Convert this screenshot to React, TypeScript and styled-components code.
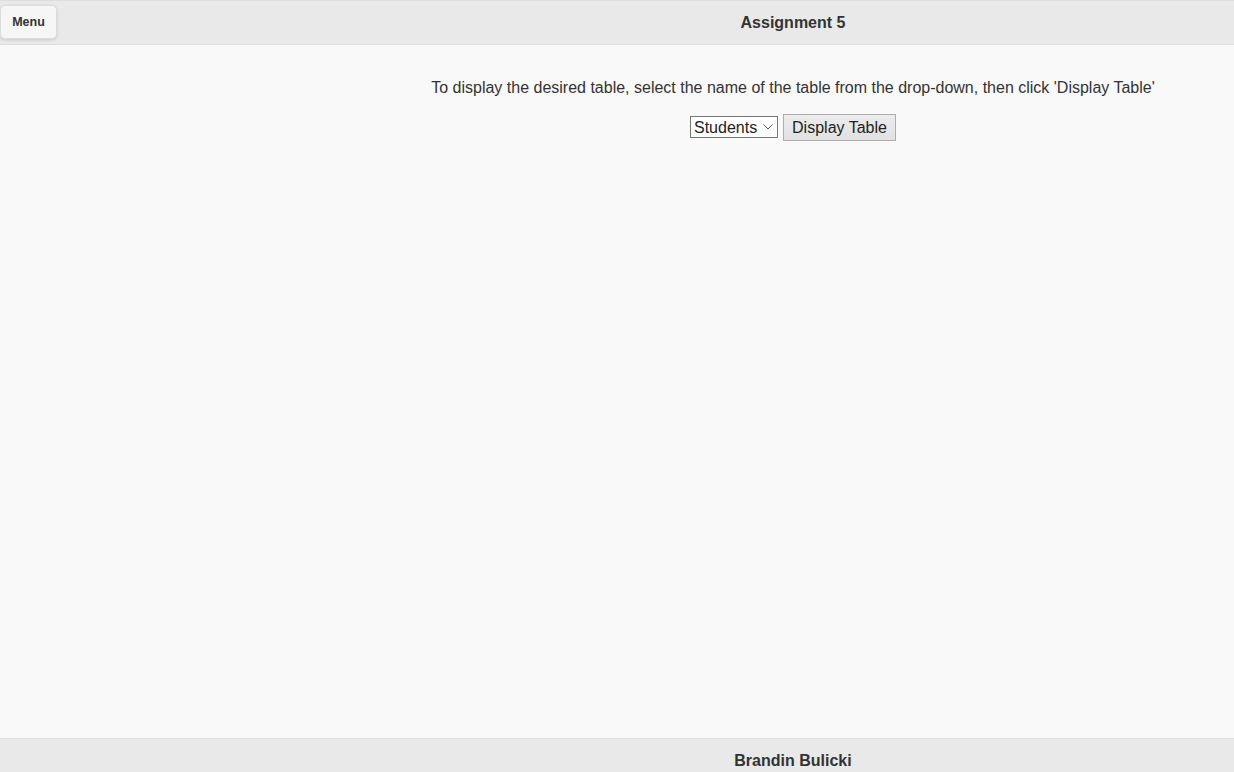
import React from 'react';
import styled, { createGlobalStyle } from 'styled-components';

const GlobalStyle = createGlobalStyle`
	html, body {
		margin: 0;
		padding: 0;
		overflow: hidden;
		background: #f9f9f9;
		font-family: 'Liberation Sans', Arial, sans-serif;
		color: #333;
	}
`;

const Page = styled.div`
	display: flex;
	flex-direction: column;
	height: 783px;
	background: #f9f9f9;
`;

const Bar = styled.div`
	position: relative;
	display: flex;
	align-items: center;
	height: 43px;
	background: #e9e9e9;
	border-top: 1px solid #dddddd;
	border-bottom: 1px solid #dddddd;
	padding-left: 352px;
`;

const Title = styled.h1`
	flex: 1;
	margin: 0;
	text-align: center;
	font-size: 16px;
	font-weight: bold;
	color: #333;
`;

const MenuButton = styled.button`
	position: absolute;
	left: 0;
	top: 4px;
	height: 34px;
	width: 57px;
	padding: 0;
	background: #f6f6f6;
	border: 1px solid #dddddd;
	border-radius: 5px;
	box-shadow: 0 1px 3px rgba(0, 0, 0, 0.15);
	font-family: 'Liberation Sans', Arial, sans-serif;
	font-size: 12.5px;
	font-weight: bold;
	color: #333;
`;

const Content = styled.main`
	flex: 1;
	padding: 17px 0 16px 352px;
	text-align: center;
`;

const Hint = styled.p`
	margin: 16px 0 15px;
	font-size: 16px;
	line-height: 20.8px;
	color: #333;
`;

const Controls = styled.div`
	display: flex;
	justify-content: center;
	align-items: center;
	gap: 5px;
`;

const SelectWrap = styled.span`
	position: relative;
	display: inline-flex;
`;

const Select = styled.select`
	appearance: none;
	-webkit-appearance: none;
	height: 22px;
	width: 88px;
	padding: 0 0 0 3px;
	background: #fff;
	border: 1px solid #767676;
	border-radius: 0;
	font-family: 'Liberation Sans', Arial, sans-serif;
	font-size: 16px;
	color: #222;
`;

const Chevron = styled.svg`
	position: absolute;
	right: 5px;
	top: 8px;
	pointer-events: none;
`;

const Button = styled.button`
	height: 27px;
	width: 113px;
	padding: 1px 0 0;
	background: linear-gradient(#ececec, #e1e1e1);
	border: 1px solid #adadad;
	border-radius: 0;
	font-family: 'Liberation Sans', Arial, sans-serif;
	font-size: 16px;
	color: #222;
`;

const App = () => {
	return (
		<>
			<GlobalStyle />
			<Page>
				<Bar>
					<MenuButton>Menu</MenuButton>
					<Title>Assignment 5</Title>
				</Bar>
				<Content>
					<Hint>
						To display the desired table, select the name of the table from the drop-down, then click 'Display Table'
					</Hint>
					<Controls>
						<SelectWrap>
							<Select defaultValue="Students">
								<option>Students</option>
								<option>Courses</option>
								<option>Enrollment</option>
							</Select>
							<Chevron width="10" height="6" viewBox="0 0 10 6">
								<path d="M0.5 0.5 L5 5 L9.5 0.5" fill="none" stroke="#555" strokeWidth="1" />
							</Chevron>
						</SelectWrap>
						<Button>Display Table</Button>
					</Controls>
				</Content>
				<Bar>
					<Title>Brandin Bulicki</Title>
				</Bar>
			</Page>
		</>
	);
};

export default App;
